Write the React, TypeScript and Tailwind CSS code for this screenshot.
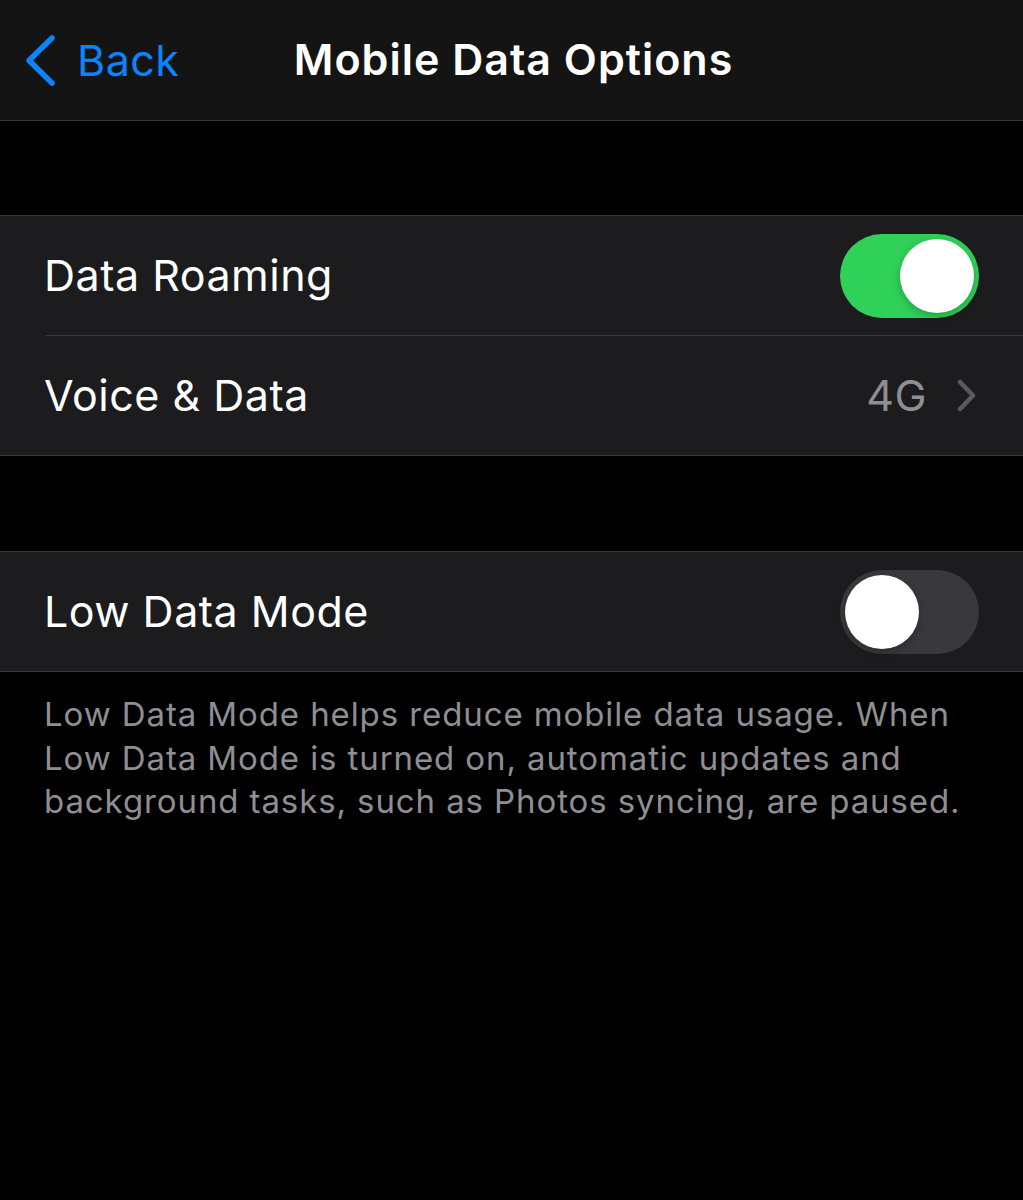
import type { ReactNode } from 'react'

function Toggle({ on }: { on: boolean }) {
  return (
    <div
      className={`w-[139px] h-[84px] rounded-full p-[5px] flex items-center shrink-0 ${
        on ? 'bg-[#30d158] justify-end' : 'bg-[#39393d] justify-start'
      }`}
    >
      <div className="w-[74px] h-[74px] rounded-full bg-white shadow-[0_3px_8px_rgba(0,0,0,0.25)]" />
    </div>
  )
}

function Row({ label, children, last }: { label: string; children?: ReactNode; last?: boolean }) {
  return (
    <div className="bg-[#1c1c1e]">
      <div className="h-[119px] flex items-center justify-between pl-[44px] pr-[44px]">
        <span className="text-[43px] text-white tracking-[0.5px]">{label}</span>
        {children}
      </div>
      {!last && <div className="ml-[45px] h-px bg-[#38383a]" />}
    </div>
  )
}

function Group({ children }: { children: ReactNode }) {
  return <div className="border-y border-[#38383a]">{children}</div>
}

export default function App() {
  return (
    <div className="min-h-[1200px] bg-black font-['Inter','Noto_Sans',sans-serif] antialiased">
      <header className="h-[121px] bg-[#141414] border-b border-[#38383a] relative flex items-center justify-center">
        <button className="absolute left-[24px] top-[35px] flex items-center gap-[21px] text-[#0a84ff]">
          <svg width="32" height="51" viewBox="0 0 32 51" fill="none">
            <path d="M28 3 L5 25.5 L28 48" stroke="currentColor" strokeWidth="5.5" strokeLinecap="round" strokeLinejoin="round" />
          </svg>
          <span className="text-[43px] leading-none tracking-[0.5px]">Back</span>
        </button>
        <h1 className="text-[43px] font-semibold text-white tracking-[1px] -mt-[1px] pl-[4px]">Mobile Data Options</h1>
      </header>

      <div className="h-[94px]" />

      <Group>
        <Row label="Data Roaming">
          <Toggle on />
        </Row>
        <Row label="Voice & Data" last>
          <div className="flex items-center gap-[30px] pr-[3px]">
            <span className="text-[43px] text-[#8e8e93] tracking-[0.5px]">4G</span>
            <svg width="19" height="33" viewBox="0 0 19 33" fill="none">
              <path d="M3 3 L16 16.5 L3 30" stroke="#5b5b5f" strokeWidth="4.5" strokeLinecap="round" strokeLinejoin="round" />
            </svg>
          </div>
        </Row>
      </Group>

      <div className="h-[95px]" />

      <Group>
        <Row label="Low Data Mode" last>
          <Toggle on={false} />
        </Row>
      </Group>

      <p className="pl-[44px] pr-[10px] pt-[21px] text-[33px] leading-[43.5px] text-[#8e8e93] tracking-[0.9px] whitespace-nowrap">
        Low Data Mode helps reduce mobile data usage. When
        <br />
        Low Data Mode is turned on, automatic updates and
        <br />
        background tasks, such as Photos syncing, are paused.
      </p>
    </div>
  )
}
